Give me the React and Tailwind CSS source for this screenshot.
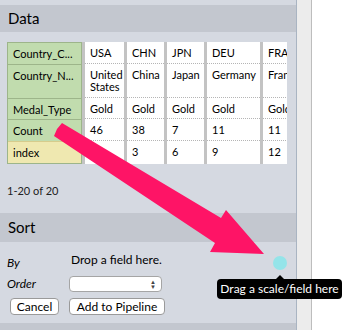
import React from "react";

const cols = [
  { w: "w-[42px]", v: ["USA", "United States", "Gold", "46", "0"] },
  { w: "w-[40px]", v: ["CHN", "China", "Gold", "38", "3"] },
  { w: "w-[40px]", v: ["JPN", "Japan", "Gold", "7", "6"] },
  { w: "w-[56px]", v: ["DEU", "Germany", "Gold", "11", "9"] },
  { w: "w-[40px]", v: ["FRA", "France", "Gold", "11", "12"] },
];

const heights = ["h-[21px]", "h-[34px]", "h-[21px]", "h-[22px]", "h-[22px]"];
const fields = ["Country_C...", "Country_N...", "Medal_Type", "Count", "index"];

function DataTable() {
  return (
    <div className="flex w-[280px] overflow-hidden text-[11px] leading-[12px] text-black">
      <div className="w-[75px] shrink-0 border border-[#9db58a]">
        {fields.map((f, i) => (
          <div
            key={f}
            className={`${heights[i]} px-[5px] pt-[5px] ${i === 4 ? "bg-[#efe8b0] border-[#d6cc8c]" : "bg-[#c1dcae] border-[#9db58a]"} ${i > 0 ? "border-t" : ""}`}
          >
            {f}
          </div>
        ))}
      </div>
      {cols.map((c, ci) => (
        <div key={ci} className={`${c.w} shrink-0 border-l-[3px] border-[#c3c3c3] bg-white first:border-l-[2px]`}>
          {c.v.map((v, i) => (
            <div
              key={i}
              className={`${heights[i]} px-[5px] pt-[5px] whitespace-nowrap ${i > 0 ? "border-t border-dotted border-[#b5b5b5]" : ""}`}
            >
              {v === "United States" ? (
                <>United<br />States</>
              ) : (
                v
              )}
            </div>
          ))}
        </div>
      ))}
    </div>
  );
}

function Arrow() {
  return (
    <svg className="absolute left-0 top-0 pointer-events-none" width="350" height="330" viewBox="0 0 350 330">
      <polygon
        points="57,129 62,123 221,218 226,210 264,254 210,252 215,243 54,136"
        fill="#fe1466"
      />
    </svg>
  );
}

export default function App() {
  return (
    <div className="relative w-[350px] h-[330px] overflow-hidden bg-white font-['Lato',sans-serif]">
      <div className="flex h-full">
        <div className="w-[297px] shrink-0 flex flex-col bg-[#d5d9e1] border-r border-[#a9b4c2]">
          <div className="h-[5px]" />
          <div className="h-[27px] bg-[#c3c7cf] px-[8px] flex items-center text-[15px] text-black">Data</div>
          <div className="pl-[7px] pt-[10px] h-[181px]">
            <DataTable />
            <div className="mt-[19px] text-[11px] text-[#222]">1-20 of 20</div>
          </div>
          <div className="h-[29px] bg-[#c3c7cf] px-[8px] flex items-center text-[15px] text-black">Sort</div>
          <div className="h-[81px] pl-[7px] pt-[9px] text-[12px] text-black">
            <div className="flex">
              <div className="w-[64px] italic pt-[3px]">By</div>
              <div>Drop a field here.</div>
            </div>
            <div className="flex items-center mt-[3px]">
              <div className="w-[62px] italic">Order</div>
              <div className="w-[93px] h-[16px] bg-white border border-[#a5a5a5] rounded-[4px] flex items-center justify-end pr-[5px] text-[6px] leading-[5px] text-[#444]">
                <span className="flex flex-col items-center"><span>▲</span><span>▼</span></span>
              </div>
            </div>
            <div className="flex mt-[5px] gap-[10px] pl-[3px] text-[12px]">
              <button className="w-[49px] h-[17px] bg-white border border-[#9a9a9a] rounded-[4px] leading-[14px]">Cancel</button>
              <button className="w-[96px] h-[17px] bg-white border border-[#9a9a9a] rounded-[4px] leading-[14px]">Add to Pipeline</button>
            </div>
          </div>
          <div className="flex-1 bg-[#c3c7cf]" />
        </div>
        <div className="w-[15px] shrink-0 bg-[#ececec] border-r border-[#bdbdbd]" />
        <div className="flex-1 bg-white" />
      </div>
      <Arrow />
      <div className="absolute left-[273px] top-[256px] w-[14px] h-[14px] rounded-full bg-[#94e4e9]" />
      <div className="absolute left-[217px] top-[279px] w-[125px] h-[20px] rounded-[4px] bg-black text-white text-[12px] flex items-center justify-center">
        <div className="absolute left-[58px] -top-[4px] w-0 h-0 border-l-[5px] border-r-[5px] border-b-[5px] border-l-transparent border-r-transparent border-b-black" />
        Drag a scale/field here
      </div>
    </div>
  );
}
